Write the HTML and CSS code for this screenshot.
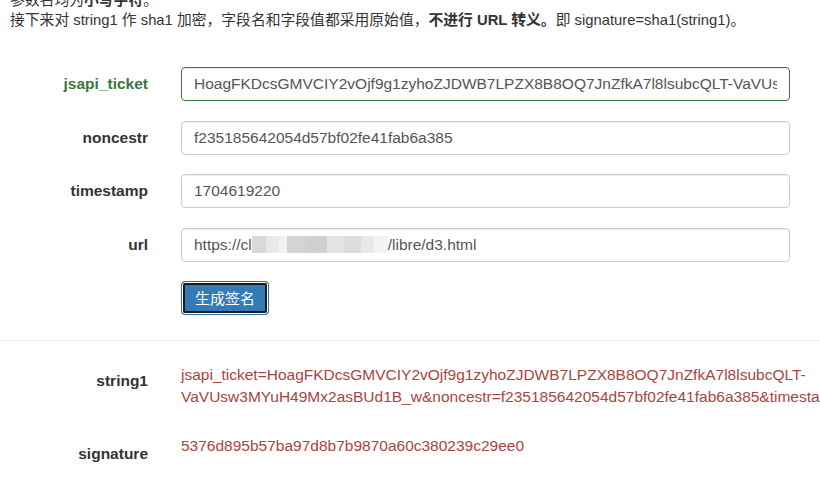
FILE: index.html
```html
<!DOCTYPE html>
<html lang="zh-CN">
<head>
<meta charset="utf-8">
<title>JS-SDK 签名</title>
<link rel="stylesheet" href="styles.css">
</head>
<body>
<div class="page">
  <div class="intro">
    <p class="line">参数名均为<b>小写字符</b>。</p>
    <p class="line">接下来对 string1 作 sha1 加密，字段名和字段值都采用原始值，<b>不进行 URL 转义。</b>即 signature=sha1(string1)。</p>
  </div>

  <form class="form">
    <div class="row success">
      <label class="label">jsapi_ticket</label>
      <input class="control" type="text" value="HoagFKDcsGMVCIY2vOjf9g1zyhoZJDWB7LPZX8B8OQ7JnZfkA7l8lsubcQLT-VaVUsw3MYuH49Mx2asBUd1B_w">
    </div>
    <div class="row">
      <label class="label">noncestr</label>
      <input class="control" type="text" value="f235185642054d57bf02fe41fab6a385">
    </div>
    <div class="row tight">
      <label class="label">timestamp</label>
      <input class="control" type="text" value="1704619220">
    </div>
    <div class="row">
      <label class="label">url</label>
      <div class="control">https://cl<span class="blur"></span>/libre/d3.html</div>
    </div>
    <div class="row">
      <span></span>
      <div><button type="button" class="btn">生成签名</button></div>
    </div>
  </form>

  <hr class="rule">

  <div class="result">
    <div class="row">
      <div class="label">string1</div>
      <div class="value">jsapi_ticket=HoagFKDcsGMVCIY2vOjf9g1zyhoZJDWB7LPZX8B8OQ7JnZfkA7l8lsubcQLT-VaVUsw3MYuH49Mx2asBUd1B_w&amp;noncestr=f235185642054d57bf02fe41fab6a385&amp;timestamp=1704619220&amp;url=https://example.com/libre/d3.html</div>
    </div>
    <div class="row sig">
      <div class="label">signature</div>
      <div class="value">5376d895b57ba97d8b7b9870a60c380239c29ee0</div>
    </div>
  </div>
</div>
</body>
</html>
```

FILE: styles.css
```css
html, body {
  margin: 0;
  padding: 0;
  background: #fff;
  overflow: hidden;
}
body {
  font-family: "Liberation Sans", Arial, "Noto Sans CJK SC", sans-serif;
  font-size: 15.5px;
  line-height: 20px;
  color: #333;
}
.page {
  width: 820px;
  height: 496px;
  overflow: hidden;
}
.intro {
  margin-top: -10px;
  padding-left: 10px;
  font-size: 14.8px;
}
.line {
  margin: 0;
  white-space: nowrap;
}
.form {
  margin-top: 37px;
  display: flex;
  flex-direction: column;
  gap: 20px;
}
.row.tight {
  margin-top: -1px;
}
.row {
  display: grid;
  grid-template-columns: 148px 609px;
  column-gap: 33px;
  align-items: start;
}
.label {
  display: block;
  text-align: right;
  font-weight: bold;
  padding-top: 7px;
  color: #333;
}
.success .label {
  color: #3c763d;
}
.control {
  display: block;
  box-sizing: border-box;
  width: 609px;
  height: 34px;
  margin: 0;
  padding: 6px 12px;
  font-family: inherit;
  font-size: 15.5px;
  line-height: 20px;
  color: #555;
  background: #fff;
  border: 1px solid #ccc;
  border-radius: 4px;
  box-shadow: inset 0 1px 1px rgba(0,0,0,.075);
  outline: none;
  white-space: nowrap;
  overflow: hidden;
}
.success .control {
  border-color: #3c763d;
}
.blur {
  display: inline-block;
  vertical-align: -3px;
  width: 136px;
  height: 17px;
  background: linear-gradient(90deg,
    #d9d9d9 0, #d9d9d9 10%, #e9e9e7 10%, #e9e9e7 20%,
    #f2f2f2 20%, #f2f2f2 26%, #d4d4d4 26%, #d4d4d4 40%,
    #cfd0cf 40%, #cfd0cf 55%, #e4e4e4 55%, #e4e4e4 68%,
    #dcdcdc 68%, #dcdcdc 80%, #e8e8e8 80%, #e8e8e8 90%, #f3f3f3 90%);
}
.btn {
  box-sizing: border-box;
  display: block;
  width: 88px;
  height: 34px;
  margin-top: -1px;
  padding: 0;
  font-family: "Noto Sans CJK SC", "Liberation Sans", sans-serif;
  font-size: 15px;
  line-height: 20px;
  color: #fff;
  background: #337ab7;
  border: 1px solid #2e6da4;
  border-radius: 4px;
  box-shadow: inset 0 0 0 1px #fff, inset 0 0 0 3px #1a1a1a;
  cursor: pointer;
}
.rule {
  margin: 25px 0 0;
  border: 0;
  border-top: 1px solid #eee;
  height: 0;
}
.result {
  margin-top: 23px;
  display: flex;
  flex-direction: column;
  gap: 27px;
}
.value {
  color: #a94442;
  line-height: 22px;
  white-space: normal;
}
.sig .label {
  padding-top: 9px;
}
```
